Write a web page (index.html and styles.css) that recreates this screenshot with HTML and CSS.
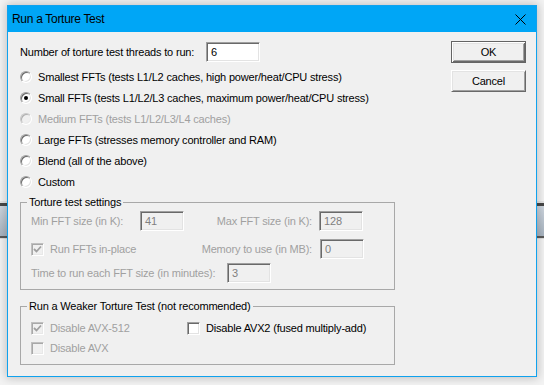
FILE: index.html
```html
<!DOCTYPE html>
<html>
<head>
<meta charset="utf-8">
<link rel="stylesheet" href="styles.css">
</head>
<body>
<div class="desktop">
  <div class="bg-strip bg-left"></div>
  <div class="bg-strip bg-right"></div>
  <div class="window">
    <div class="titlebar">
      <span class="title">Run a Torture Test</span>
      <svg class="close" width="11" height="11" viewBox="0 0 11 11"><path d="M0.5 0.5 L10.5 10.5 M10.5 0.5 L0.5 10.5" stroke="#000" stroke-width="1" fill="none"/></svg>
    </div>
    <div class="client">
      <div class="main">
        <div class="threads">
          <span class="threads-label">Number of torture test threads to run:</span>
          <div class="edit edit-threads">6</div>
        </div>
        <div class="radios">
          <div class="radio-row"><span class="radio"></span><span>Smallest FFTs (tests L1/L2 caches, high power/heat/CPU stress)</span></div>
          <div class="radio-row"><span class="radio checked"></span><span>Small FFTs (tests L1/L2/L3 caches, maximum power/heat/CPU stress)</span></div>
          <div class="radio-row disabled"><span class="radio"></span><span>Medium FFTs (tests L1/L2/L3/L4 caches)</span></div>
          <div class="radio-row"><span class="radio"></span><span>Large FFTs (stresses memory controller and RAM)</span></div>
          <div class="radio-row"><span class="radio"></span><span>Blend (all of the above)</span></div>
          <div class="radio-row"><span class="radio"></span><span>Custom</span></div>
        </div>
        <fieldset class="group group-settings">
          <legend>Torture test settings</legend>
          <div class="row disabled">
            <span class="lbl-min">Min FFT size (in K):</span>
            <div class="edit edit-small">41</div>
            <span class="lbl-right">Max FFT size (in K):</span>
            <div class="edit edit-small gap7">128</div>
          </div>
          <div class="row row-mem disabled">
            <div class="check-item w153"><span class="check checked"><svg width="9" height="9" viewBox="0 0 9 9"><path d="M1 4 L3.5 6.5 L8 1.5" stroke="#a0a0a0" stroke-width="1.8" fill="none"/></svg></span><span>Run FFTs in-place</span></div>
            <span class="lbl-right">Memory to use (in MB):</span>
            <div class="edit edit-small gap8">0</div>
          </div>
          <div class="row row-time disabled">
            <span class="lbl-time">Time to run each FFT size (in minutes):</span>
            <div class="edit edit-small">3</div>
          </div>
        </fieldset>
        <fieldset class="group group-weak">
          <legend>Run a Weaker Torture Test (not recommended)</legend>
          <div class="row">
            <div class="check-item w156 disabled"><span class="check checked"><svg width="9" height="9" viewBox="0 0 9 9"><path d="M1 4 L3.5 6.5 L8 1.5" stroke="#a0a0a0" stroke-width="1.8" fill="none"/></svg></span><span>Disable AVX-512</span></div>
            <div class="check-item"><span class="check enabled"></span><span>Disable AVX2 (fused multiply-add)</span></div>
          </div>
          <div class="row">
            <div class="check-item disabled"><span class="check"></span><span>Disable AVX</span></div>
          </div>
        </fieldset>
      </div>
      <div class="buttons">
        <div class="btn btn-default">OK</div>
        <div class="btn btn-cancel">Cancel</div>
      </div>
    </div>
  </div>
</div>
</body>
</html>
```
FILE: styles.css
```css
html, body {
  margin: 0;
  padding: 0;
}
body {
  background: #f3f3f3;
  font-family: "Liberation Sans", Arial, sans-serif;
  font-size: 11px;
  letter-spacing: -0.18px;
  color: #000;
}
.desktop {
  position: relative;
  width: 544px;
  height: 385px;
  overflow: hidden;
  padding: 5px 0 0 7px;
  box-sizing: border-box;
}
.bg-strip {
  position: absolute;
  top: 201px;
  width: 7px;
  height: 38px;
  background: linear-gradient(#e4e4e4 0 2px, #474747 2px 5px, #cdd5de 5px, #a7b3bf 35px, #5a5a5a 35px 37px, #dcdcdc 37px);
}
.bg-left { left: 0; }
.bg-right { left: 537px; }
.window {
  position: relative;
  width: 530px;
  height: 372px;
  box-sizing: border-box;
  border: 1px solid #10a2ee;
  background: #f0f0f0;
  box-shadow: 0 0 9px 1px rgba(0, 0, 0, 0.22);
  display: flex;
  flex-direction: column;
}
.titlebar {
  height: 26px;
  flex: none;
  background: #00a6f6;
  display: flex;
  align-items: center;
  justify-content: space-between;
  padding: 0 10px 0 4px;
}
.title {
  font-family: "Liberation Sans", Arial, sans-serif;
  font-size: 12px;
  letter-spacing: -0.3px;
}
.close { display: block; }
.client {
  flex: 1;
  display: flex;
  justify-content: space-between;
  padding: 9px 10px 0 12px;
}
.main { width: 375px; }
.threads {
  display: flex;
  align-items: center;
  height: 20px;
  margin-top: 1px;
}
.threads-label { width: 186px; flex: none; }
.edit {
  box-sizing: border-box;
  height: 20px;
  border: 1px solid;
  border-color: #a0a0a0 #ffffff #ffffff #a0a0a0;
  box-shadow: inset 1px 1px #696969, inset -1px -1px #e3e3e3;
  background: #f0f0f0;
  color: #808080;
  padding-left: 4px;
  line-height: 18px;
  flex: none;
}
.edit-threads {
  width: 54px;
  background: #fff;
  color: #000;
}
.edit-small { width: 44px; }
.gap7 { margin-left: 7px; }
.gap8 { margin-left: 8px; }
.radios { margin-top: 4px; }
.radio-row {
  height: 21px;
  display: flex;
  align-items: center;
}
.radio {
  width: 12px;
  height: 12px;
  box-sizing: border-box;
  border-radius: 50%;
  border: 1px solid;
  border-color: #a0a0a0 #ffffff #ffffff #a0a0a0;
  box-shadow: inset 1px 1px #696969, inset -1px -1px #e3e3e3;
  background: #fff;
  margin-right: 6px;
  display: flex;
  align-items: center;
  justify-content: center;
  flex: none;
}
.radio.checked::after {
  content: "";
  width: 4px;
  height: 4px;
  border-radius: 50%;
  background: #000;
}
.disabled { color: #a0a0a0; }
.radio-row.disabled .radio {
  background: #f0f0f0;
  border-color: #c8c8c8 #ffffff #ffffff #c8c8c8;
  box-shadow: inset 1px 1px #b0b0b0, inset -1px -1px #ececec;
}
.group {
  margin: 4px 0 0;
  padding: 2px 0 6px;
  border: 1px solid #a8a8a8;
  min-width: 0;
}
.group legend {
  padding: 0 2px;
  margin-left: 6px;
  line-height: 13px;
  color: #000;
}
.group-weak {
  margin-top: 10px;
  padding-top: 5px;
}
.row {
  display: flex;
  align-items: center;
  height: 20px;
  padding-left: 10px;
}
.row-mem { margin-top: 8px; }
.row-time { margin-top: 4px; }
.lbl-min { width: 109px; flex: none; }
.lbl-right { width: 128px; text-align: right; flex: none; }
.lbl-time { width: 196px; flex: none; }
.check-item {
  display: flex;
  align-items: center;
  flex: none;
}
.w153 { width: 153px; }
.w156 { width: 156px; }
.check {
  width: 13px;
  height: 13px;
  box-sizing: border-box;
  border: 1px solid;
  border-color: #c0c0c0 #ffffff #ffffff #c0c0c0;
  box-shadow: inset 1px 1px #a8a8a8, inset -1px -1px #e8e8e8;
  background: #f0f0f0;
  margin-right: 6px;
  display: flex;
  align-items: center;
  justify-content: center;
  flex: none;
}
.check svg { display: block; }
.check.enabled {
  border-color: #a0a0a0 #ffffff #ffffff #a0a0a0;
  box-shadow: inset 1px 1px #696969, inset -1px -1px #e3e3e3;
  background: #fff;
}
.buttons {
  width: 75px;
  display: flex;
  flex-direction: column;
}
.btn {
  box-sizing: border-box;
  width: 75px;
  height: 22px;
  display: flex;
  align-items: center;
  justify-content: center;
  background: #f0f0f0;
  border: 1px solid;
  border-color: #ffffff #696969 #696969 #ffffff;
  box-shadow: inset 1px 1px #e3e3e3, inset -1px -1px #a0a0a0;
}
.btn-default {
  border-color: #646464;
  box-shadow: inset 1px 1px #ffffff, inset -1px -1px #696969, inset 2px 2px #e3e3e3, inset -2px -2px #a0a0a0;
}
.btn-cancel { margin-top: 7px; }
```
